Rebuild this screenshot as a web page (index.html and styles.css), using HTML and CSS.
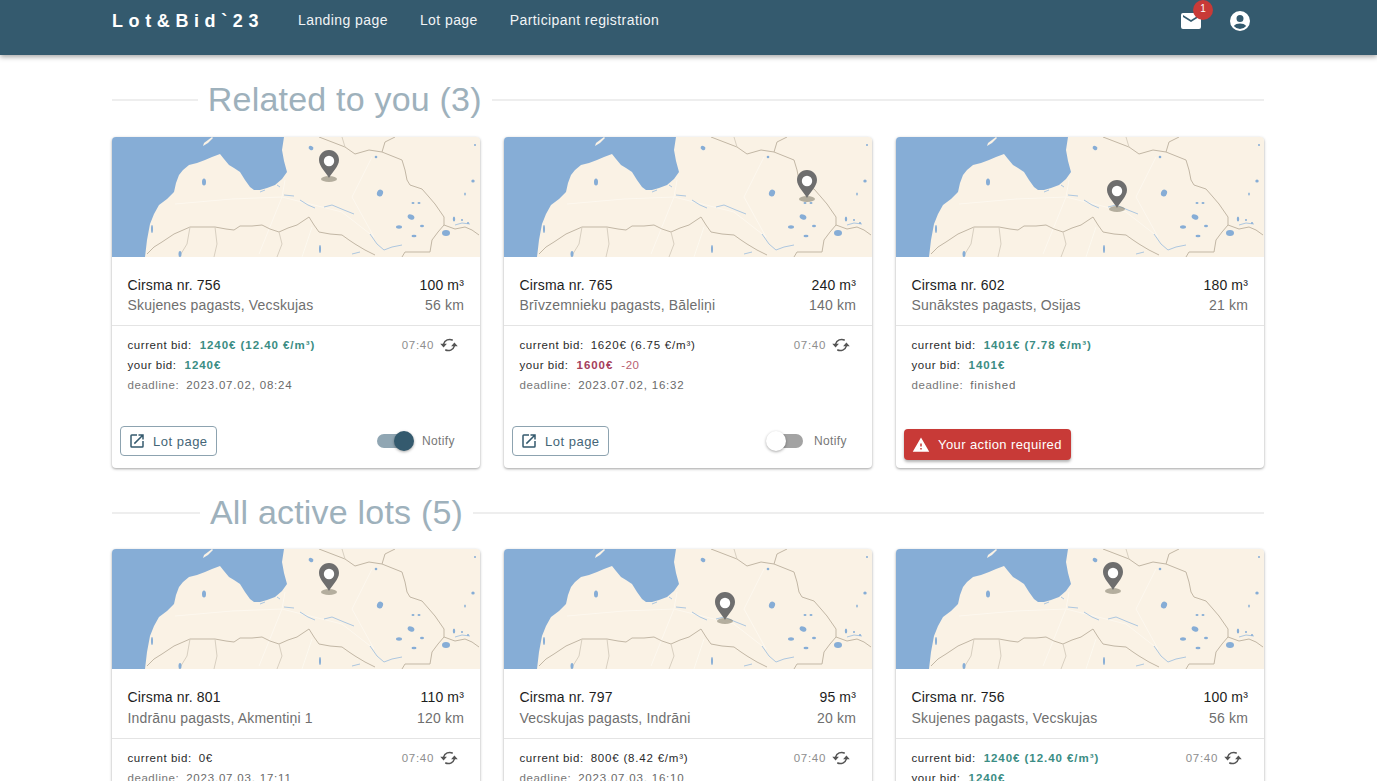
FILE: index.html
```html
<!DOCTYPE html>
<html lang="en">
<head>
<meta charset="utf-8">
<title>Lot&amp;Bid`23</title>
<link rel="stylesheet" href="styles.css">
</head>
<body>
<svg class="defs" width="0" height="0" aria-hidden="true">
  <defs>
    <symbol id="map" viewBox="0 0 368 120" preserveAspectRatio="none">
      <rect width="368" height="120" fill="#faf2e5"/>
      <path fill="#86add6" d="M0 0H172L170 13 172 24 175 35 170 42 163 48 155 51 148 53 142 53 138 50 133 43 128 35 122 31 117 28 112 22 108 17 100 20 93 23 85 26 77 28 71 33 67 38 64 46 62 55 55 62 47 68 42 77 38 87 35 103 33 120H0Z"/>
      <path fill="#faf2e5" d="M100 0 101 1 96 6 91 9 92 6 96 3Z"/>
      <g fill="none" stroke="#fdf8ef" stroke-width="1">
        <path d="M173 43 170 60 147 117M170 60 120 62 63 67M170 60 230 75 262 100M200 90 190 120M260 20 240 60 262 100"/>
      </g>
      <g fill="none" stroke="#c2b7a5" stroke-width="1">
        <path d="M35 117 42 110 50 105 62 97 78 90 90 90 103 90 114 92 122 93 128 89 140 89 150 88 158 92 167 95 176 91 185 88 197 80 202 88 207 95 218 97 230 98 237 103 243 107 253 113 263 118"/>
        <path d="M207 0 220 5 233 10 243 17 257 13 270 15 280 19 290 23 293 33 295 43 298 48 310 52 317 60 323 67 332 80 332 88 326 95 320 103 318 115 293 115 290 120"/>
        <path d="M270 15 273 5 283 0M332 88 343 92 353 90 360 93 367 98"/>
      </g>
      <g fill="none" stroke="#d8cfc0" stroke-width="1">
        <path d="M78 90 75 107 67 120M103 90 105 107 102 120M167 95 170 107 165 120M233 10 230 0"/>
      </g>
      <g fill="none" stroke="#adc7e0" stroke-width="1">
        <path d="M148 55 153 53M165 48 168 50M172 58 182 59M188 63 196 68 203 71M212 70 220 68 232 73 242 77M258 97 265 107 272 113 280 110 290 108M343 88 350 86 358 87M240 117 248 115"/>
      </g>
      <g fill="#86add6">
        <ellipse cx="92" cy="45" rx="2" ry="3.500"/>
        <ellipse cx="199" cy="11" rx="2.500" ry="2" transform="rotate(30 199 11)"/>
        <ellipse cx="268" cy="56" rx="3" ry="3.500" transform="rotate(20 268 56)"/>
        <ellipse cx="264" cy="20" rx="1.300" ry="1.300"/>
        <ellipse cx="299" cy="80" rx="3.500" ry="2.500" transform="rotate(25 299 80)"/>
        <ellipse cx="287" cy="90" rx="3" ry="1.700"/>
        <ellipse cx="310" cy="89" rx="2" ry="1.300"/>
        <ellipse cx="302" cy="99" rx="2.500" ry="1.300"/>
        <ellipse cx="334" cy="96" rx="4" ry="3"/>
        <ellipse cx="301" cy="66" rx="1.500" ry="1"/>
        <ellipse cx="307" cy="66" rx="1.500" ry="1"/>
        <ellipse cx="342" cy="82" rx="1.200" ry="2.500"/>
        <ellipse cx="361" cy="44" rx="1.700" ry="1.500"/>
        <ellipse cx="353" cy="57" rx=".8" ry="1.500"/>
        <ellipse cx="363" cy="8" rx="1" ry="1"/>
        <ellipse cx="40" cy="92" rx="1" ry="4"/>
        <ellipse cx="208" cy="112" rx="1" ry="4"/>
        <ellipse cx="68" cy="117" rx="1.500" ry="3"/>
        <ellipse cx="350" cy="83" rx="1" ry="1"/>
        <ellipse cx="356" cy="86" rx="1" ry="1"/>
      </g>
    </symbol>
    <symbol id="pin" viewBox="0 0 24 36">
      <ellipse cx="12" cy="29" rx="8" ry="3" fill="#86806e" opacity=".6"/>
      <path fill="#6e6e6e" d="M12 0C6.200 0 2 4.500 2 10c0 6.500 7.500 13 10 18 2.500-5 10-11.500 10-18C22 4.500 17.800 0 12 0Z"/>
      <circle cx="12" cy="11" r="5.200" fill="#fff"/>
    </symbol>
    <symbol id="sync" viewBox="0 0 24 24">
      <path fill="none" stroke="currentColor" stroke-width="1.800" d="M16.500 6.300A7.500 7.500 0 0 0 5.500 11M7.500 17.700A7.500 7.500 0 0 0 18.500 13"/>
      <path fill="currentColor" d="M1.500 10.500h8l-4 4.500zM22.500 13.500h-8l4-4.500z"/>
    </symbol>
    <symbol id="open" viewBox="0 0 24 24">
      <path fill="currentColor" d="M19 19H5V5h7V3H5a2 2 0 0 0-2 2v14a2 2 0 0 0 2 2h14a2 2 0 0 0 2-2v-7h-2v7zM14 3v2h3.590l-9.830 9.830 1.410 1.410L19 6.410V10h2V3h-7z"/>
    </symbol>
  </defs>
</svg>

<header class="topbar">
  <div class="brand">Lot&amp;Bid`23</div>
  <nav class="nav">
    <a class="nav-link">Landing page</a>
    <a class="nav-link">Lot page</a>
    <a class="nav-link">Participant registration</a>
  </nav>
  <div class="top-icons">
    <div class="mail">
      <svg class="top-icon" viewBox="0 0 24 24"><path fill="#fff" d="M20 4H4a2 2 0 0 0-2 2v12a2 2 0 0 0 2 2h16a2 2 0 0 0 2-2V6a2 2 0 0 0-2-2zm0 4-8 5-8-5V6l8 5 8-5v2z"/></svg>
      <span class="badge">1</span>
    </div>
    <svg class="top-icon" viewBox="0 0 24 24"><path fill="#fff" d="M12 2a10 10 0 1 0 0 20 10 10 0 0 0 0-20zm0 4a3.500 3.500 0 1 1 0 7 3.500 3.500 0 0 1 0-7zm0 14a8 8 0 0 1-6.200-2.950C7 15.300 9.500 14.500 12 14.500s5 .8 6.200 2.550A8 8 0 0 1 12 20z"/></svg>
  </div>
</header>

<main class="page">
  <section class="section first">
    <h2 class="heading"><span class="rule short"></span><span class="heading-text">Related to you (3)</span><span class="rule long"></span></h2>
    <div class="grid">
      <article class="card">
        <div class="map"><svg class="map-art"><use href="#map"/></svg><svg class="pin" style="left:205px;top:13px"><use href="#pin"/></svg></div>
        <div class="head">
          <div class="head-row"><span class="name">Cirsma nr. 756</span><span class="name">100 m³</span></div>
          <div class="head-row"><span class="place">Skujenes pagasts, Vecskujas</span><span class="place">56 km</span></div>
        </div>
        <div class="info">
          <div class="clock"><span>07:40</span><svg class="sync"><use href="#sync"/></svg></div>
          <div class="line">current bid:<b class="good">1240€ (12.40 €/m³)</b></div>
          <div class="line">your bid:<b class="good">1240€</b></div>
          <div class="line muted">deadline:<span class="val">2023.07.02, 08:24</span></div>
        </div>
        <div class="foot">
          <button class="btn"><svg class="btn-icon"><use href="#open"/></svg>Lot page</button>
          <div class="notify"><span class="switch on"><i class="knob"></i></span><span class="notify-label">Notify</span></div>
        </div>
      </article>

      <article class="card">
        <div class="map"><svg class="map-art"><use href="#map"/></svg><svg class="pin" style="left:291px;top:33px"><use href="#pin"/></svg></div>
        <div class="head">
          <div class="head-row"><span class="name">Cirsma nr. 765</span><span class="name">240 m³</span></div>
          <div class="head-row"><span class="place">Brīvzemnieku pagasts, Bāleliņi</span><span class="place">140 km</span></div>
        </div>
        <div class="info">
          <div class="clock"><span>07:40</span><svg class="sync"><use href="#sync"/></svg></div>
          <div class="line">current bid:<span class="val">1620€ (6.75 €/m³)</span></div>
          <div class="line">your bid:<b class="bad">1600€</b><span class="diff">-20</span></div>
          <div class="line muted">deadline:<span class="val">2023.07.02, 16:32</span></div>
        </div>
        <div class="foot">
          <button class="btn"><svg class="btn-icon"><use href="#open"/></svg>Lot page</button>
          <div class="notify"><span class="switch"><i class="knob"></i></span><span class="notify-label">Notify</span></div>
        </div>
      </article>

      <article class="card">
        <div class="map"><svg class="map-art"><use href="#map"/></svg><svg class="pin" style="left:209px;top:43px"><use href="#pin"/></svg></div>
        <div class="head">
          <div class="head-row"><span class="name">Cirsma nr. 602</span><span class="name">180 m³</span></div>
          <div class="head-row"><span class="place">Sunākstes pagasts, Osijas</span><span class="place">21 km</span></div>
        </div>
        <div class="info">
          <div class="line">current bid:<b class="good">1401€ (7.78 €/m³)</b></div>
          <div class="line">your bid:<b class="good">1401€</b></div>
          <div class="line muted">deadline:<span class="val">finished</span></div>
        </div>
        <div class="foot">
          <button class="btn-alert"><svg class="alert-icon" viewBox="0 0 24 24"><path fill="#fff" d="M1 21h22L12 2 1 21zm12-3h-2v-2h2v2zm0-4h-2v-4h2v4z"/></svg>Your action required</button>
        </div>
      </article>
    </div>
  </section>

  <section class="section second">
    <h2 class="heading"><span class="rule short"></span><span class="heading-text">All active lots (5)</span><span class="rule long"></span></h2>
    <div class="grid">
      <article class="card">
        <div class="map"><svg class="map-art"><use href="#map"/></svg><svg class="pin" style="left:205px;top:14px"><use href="#pin"/></svg></div>
        <div class="head">
          <div class="head-row"><span class="name">Cirsma nr. 801</span><span class="name">110 m³</span></div>
          <div class="head-row"><span class="place">Indrānu pagasts, Akmentiņi 1</span><span class="place">120 km</span></div>
        </div>
        <div class="info">
          <div class="clock"><span>07:40</span><svg class="sync"><use href="#sync"/></svg></div>
          <div class="line">current bid:<span class="val">0€</span></div>
          <div class="line muted">deadline:<span class="val">2023.07.03, 17:11</span></div>
        </div>
      </article>

      <article class="card">
        <div class="map"><svg class="map-art"><use href="#map"/></svg><svg class="pin" style="left:209px;top:43px"><use href="#pin"/></svg></div>
        <div class="head">
          <div class="head-row"><span class="name">Cirsma nr. 797</span><span class="name">95 m³</span></div>
          <div class="head-row"><span class="place">Vecskujas pagasts, Indrāni</span><span class="place">20 km</span></div>
        </div>
        <div class="info">
          <div class="clock"><span>07:40</span><svg class="sync"><use href="#sync"/></svg></div>
          <div class="line">current bid:<span class="val">800€ (8.42 €/m³)</span></div>
          <div class="line muted">deadline:<span class="val">2023.07.03, 16:10</span></div>
        </div>
      </article>

      <article class="card">
        <div class="map"><svg class="map-art"><use href="#map"/></svg><svg class="pin" style="left:205px;top:13px"><use href="#pin"/></svg></div>
        <div class="head">
          <div class="head-row"><span class="name">Cirsma nr. 756</span><span class="name">100 m³</span></div>
          <div class="head-row"><span class="place">Skujenes pagasts, Vecskujas</span><span class="place">56 km</span></div>
        </div>
        <div class="info">
          <div class="clock"><span>07:40</span><svg class="sync"><use href="#sync"/></svg></div>
          <div class="line">current bid:<b class="good">1240€ (12.40 €/m³)</b></div>
          <div class="line">your bid:<b class="good">1240€</b></div>
        </div>
      </article>
    </div>
  </section>
</main>
</body>
</html>
```
FILE: styles.css
```css
* { box-sizing: border-box; }
html, body { height: 100%; overflow: hidden; }
body {
  margin: 0;
  background: #fff;
  color: #1d1d1d;
  font-family: "Liberation Sans", Arial, sans-serif;
}
.defs { display: block; height: 0; }

.topbar {
  height: 55px;
  background: #345a6e;
  color: #fff;
  display: flex;
  align-items: flex-start;
  padding: 0 125px 0 112px;
  box-shadow: 0 2px 5px rgba(0, 0, 0, .35);
  position: relative;
  z-index: 2;
}
.brand {
  font-size: 18px;
  font-weight: 700;
  letter-spacing: 5.6px;
  line-height: 42px;
  width: 186px;
  white-space: nowrap;
}
.nav { display: flex; gap: 32px; line-height: 41px; font-size: 14px; letter-spacing: .42px; }
.nav-link { color: #f1f4f6; }
.top-icons { margin-left: auto; display: flex; gap: 25px; padding-top: 9px; }
.mail { position: relative; height: 24px; }
.top-icon { width: 24px; height: 24px; display: block; }
.badge {
  position: absolute;
  left: 14px;
  top: -9px;
  width: 20px;
  height: 20px;
  border-radius: 50%;
  background: #c83a37;
  color: #fff;
  font-size: 10px;
  line-height: 18px;
  text-align: center;
}

.page { width: 1152px; margin-left: 112px; }
.section.first { padding-top: 24px; }
.section.second { padding-top: 24px; }
.heading {
  height: 40px;
  display: flex;
  align-items: center;
  gap: 10px;
  font-weight: 400;
  margin: 0;
}
.first .heading { margin-bottom: 18px; }
.second .heading { margin-bottom: 17px; }
.heading-text {
  font-size: 34px;
  line-height: 40px;
  letter-spacing: .2px;
  color: #9eb1bc;
  white-space: nowrap;
}
.rule { height: 2px; background: #eee; margin-top: 1px; }
.rule.short { flex: 1 1 0; }
.rule.long { flex: 9 1 0; }

.grid { display: grid; grid-template-columns: repeat(3, 368px); gap: 24px; }
.card {
  height: 331px;
  background: #fff;
  border-radius: 4px;
  box-shadow: 0 1px 3px rgba(0, 0, 0, .3), 0 1px 2px rgba(0, 0, 0, .08);
  display: flex;
  flex-direction: column;
  overflow: hidden;
}
.map { position: relative; height: 120px; flex: none; overflow: hidden; }
.map-art { display: block; width: 368px; height: 120px; filter: blur(.5px); }
.pin { position: absolute; width: 24px; height: 36px; filter: blur(.3px); }

.head {
  height: 69px;
  padding: 18px 16px 0 15.5px;
  border-bottom: 1px solid #e4e4e4;
  flex: none;
}
.second .head { height: 70px; }
.second .head-row + .head-row { margin-top: 1px; }
.head-row { display: flex; justify-content: space-between; height: 20px; line-height: 20px; white-space: nowrap; }
.name { font-size: 14px; letter-spacing: .15px; color: #1d1d1d; }
.place { font-size: 14px; letter-spacing: .17px; color: #6f6f6f; }

.info { position: relative; padding: 9px 16px 0 15.5px; flex: 1; }
.line { font-size: 11.5px; line-height: 20px; letter-spacing: .55px; color: #2a2a2a; white-space: nowrap; }
.line .val { margin-left: 7px; letter-spacing: .8px; }
.line b { margin-left: 8px; letter-spacing: .95px; }
.line.muted { color: #777; }
.line.muted .val { color: #6a6a6a; }
.good { color: #3b8d84; }
.bad { color: #a5405c; }
.diff { color: #b8606f; margin-left: 8px; }
.clock {
  position: absolute;
  right: 21px;
  top: 9px;
  display: flex;
  align-items: center;
  gap: 5px;
  height: 20px;
  font-size: 11.5px;
  letter-spacing: .7px;
  color: #8e8e8e;
}
.sync { width: 20px; height: 20px; color: #555; }

.foot {
  height: 42px;
  padding: 0 8px;
  display: flex;
  align-items: flex-start;
  justify-content: space-between;
  flex: none;
}
.btn {
  width: 97px;
  height: 30px;
  padding: 0 0 0 7px;
  display: flex;
  align-items: center;
  gap: 7px;
  border: 1px solid #8da3b0;
  border-radius: 4px;
  background: #fff;
  color: #446577;
  font-family: inherit;
  font-size: 13px;
  letter-spacing: .5px;
}
.btn-icon { width: 18px; height: 18px; flex: none; color: #345a6e; }
.notify { display: flex; align-items: center; gap: 9px; height: 30px; padding-right: 17px; }
.notify-label { font-size: 12px; letter-spacing: .4px; color: #777; }
.switch {
  position: relative;
  width: 34px;
  height: 14px;
  border-radius: 7px;
  margin-left: 2px;
  background: #a3a3a3;
  margin-right: 2px;
}
.switch.on { background: #90a6b3; }
.knob {
  position: absolute;
  left: -3px;
  top: -3px;
  width: 20px;
  height: 20px;
  border-radius: 50%;
  background: #fff;
  box-shadow: 0 1px 3px rgba(0, 0, 0, .35);
}
.switch.on .knob { left: 17px; background: #345a6e; }
.btn-alert {
  margin-top: 3px;
  width: 167px;
  height: 31px;
  display: flex;
  align-items: center;
  gap: 8px;
  padding: 0 0 0 8px;
  border: 0;
  border-radius: 4px;
  background: #c83a37;
  color: #fff;
  font-family: inherit;
  font-size: 13px;
  letter-spacing: .4px;
  box-shadow: 0 2px 3px rgba(0, 0, 0, .3);
  white-space: nowrap;
}
.alert-icon { width: 18px; height: 18px; flex: none; }
```
